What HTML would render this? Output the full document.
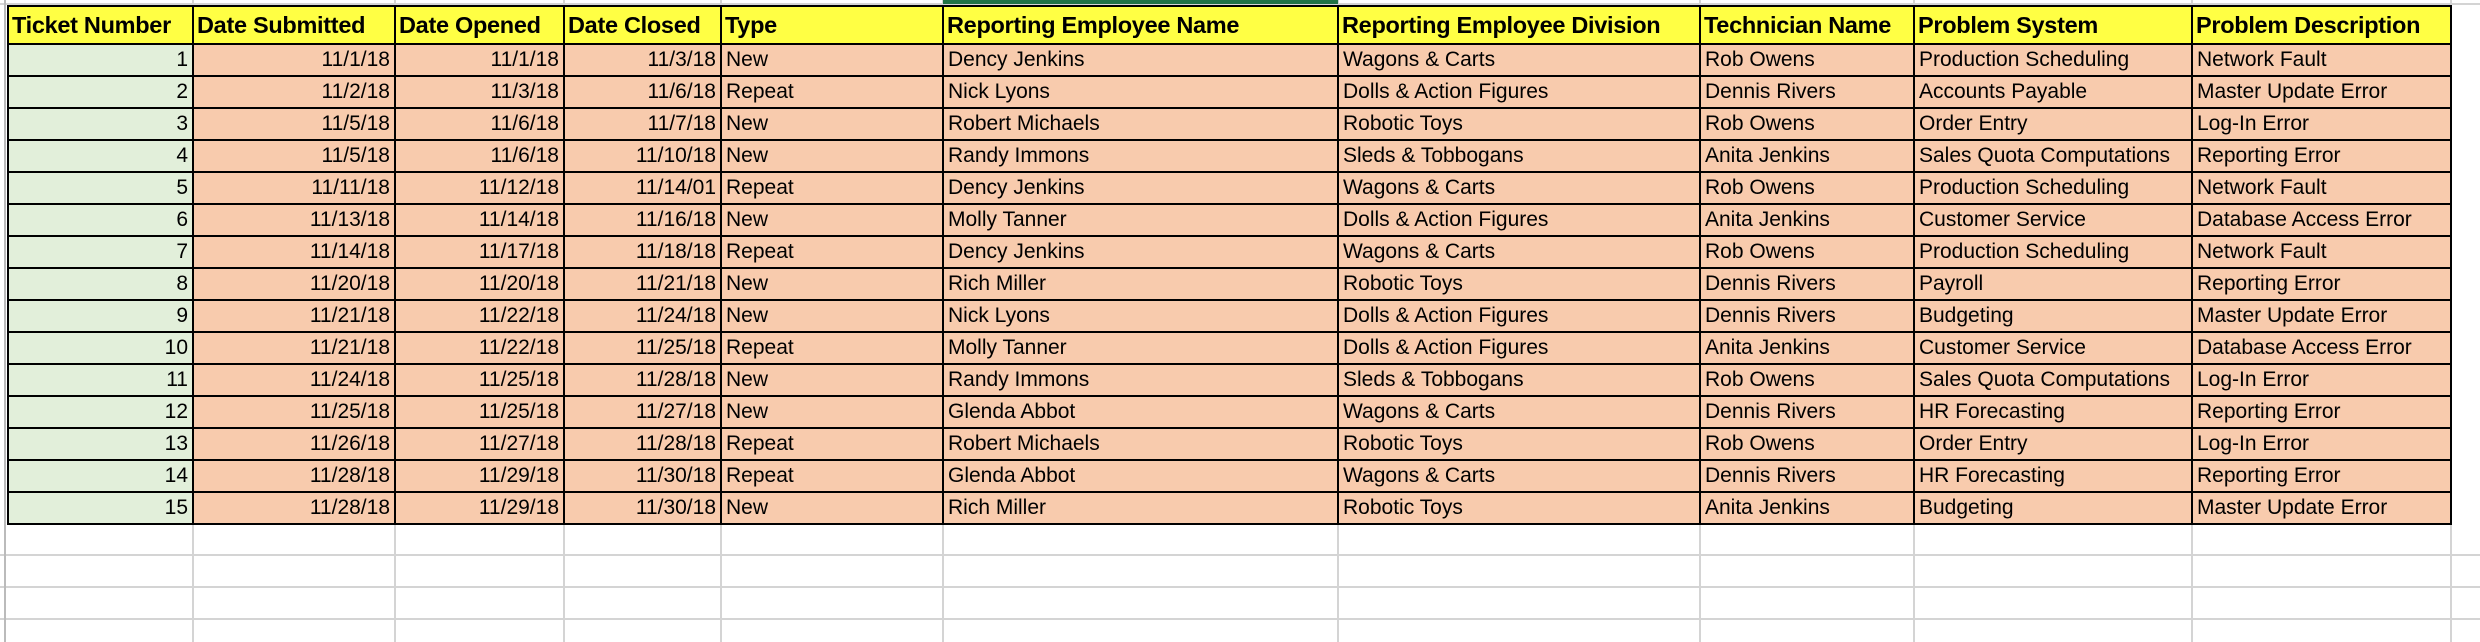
<!DOCTYPE html>
<html><head><meta charset="utf-8"><style>
html,body{margin:0;padding:0;background:#fff;width:2480px;height:642px;overflow:hidden;position:relative;font-family:"Liberation Sans",sans-serif;}
.gv{position:absolute;top:0;width:2px;height:642px;background:#d4d4d4;}
.gh{position:absolute;left:0;height:2px;width:2480px;background:#d4d4d4;}
table{position:absolute;left:7px;top:5px;border-collapse:collapse;table-layout:fixed;background:#fff;}
td{border:2px solid #000;height:30px;padding:0 4px;font-size:21px;white-space:nowrap;overflow:hidden;background:#f8cbad;color:#000;line-height:30px;}
tr.h td{background:#ffff44;font-weight:bold;height:36px;line-height:36px;font-size:23.5px;letter-spacing:-0.3px;padding:0 3px;}
td.n{background:#e2efda;text-align:right;}
td.r{text-align:right;}
</style></head><body>
<div class="gh" style="top:3px"></div>
<div class="gh" style="top:554px"></div>
<div class="gh" style="top:586px"></div>
<div class="gh" style="top:618px"></div>
<div class="gv" style="left:4px;background:#bbb"></div>
<div class="gv" style="left:192px"></div><div class="gv" style="left:394px"></div><div class="gv" style="left:563px"></div><div class="gv" style="left:720px"></div><div class="gv" style="left:942px"></div><div class="gv" style="left:1337px"></div><div class="gv" style="left:1699px"></div><div class="gv" style="left:1913px"></div><div class="gv" style="left:2191px"></div><div class="gv" style="left:2450px"></div>
<div style="position:absolute;left:943px;top:0;width:395px;height:4px;background:#217346"></div>
<table>
<colgroup><col style="width:185px"><col style="width:202px"><col style="width:169px"><col style="width:157px"><col style="width:222px"><col style="width:395px"><col style="width:362px"><col style="width:214px"><col style="width:278px"><col style="width:259px"></colgroup>
<tr class="h"><td>Ticket Number</td><td>Date Submitted</td><td>Date Opened</td><td>Date Closed</td><td>Type</td><td>Reporting Employee Name</td><td>Reporting Employee Division</td><td>Technician Name</td><td>Problem System</td><td>Problem Description</td></tr>
<tr><td class="n">1</td><td class="r">11/1/18</td><td class="r">11/1/18</td><td class="r">11/3/18</td><td>New</td><td>Dency Jenkins</td><td>Wagons &amp; Carts</td><td>Rob Owens</td><td>Production Scheduling</td><td>Network Fault</td></tr>
<tr><td class="n">2</td><td class="r">11/2/18</td><td class="r">11/3/18</td><td class="r">11/6/18</td><td>Repeat</td><td>Nick Lyons</td><td>Dolls &amp; Action Figures</td><td>Dennis Rivers</td><td>Accounts Payable</td><td>Master Update Error</td></tr>
<tr><td class="n">3</td><td class="r">11/5/18</td><td class="r">11/6/18</td><td class="r">11/7/18</td><td>New</td><td>Robert Michaels</td><td>Robotic Toys</td><td>Rob Owens</td><td>Order Entry</td><td>Log-In Error</td></tr>
<tr><td class="n">4</td><td class="r">11/5/18</td><td class="r">11/6/18</td><td class="r">11/10/18</td><td>New</td><td>Randy Immons</td><td>Sleds &amp; Tobbogans</td><td>Anita Jenkins</td><td>Sales Quota Computations</td><td>Reporting Error</td></tr>
<tr><td class="n">5</td><td class="r">11/11/18</td><td class="r">11/12/18</td><td class="r">11/14/01</td><td>Repeat</td><td>Dency Jenkins</td><td>Wagons &amp; Carts</td><td>Rob Owens</td><td>Production Scheduling</td><td>Network Fault</td></tr>
<tr><td class="n">6</td><td class="r">11/13/18</td><td class="r">11/14/18</td><td class="r">11/16/18</td><td>New</td><td>Molly Tanner</td><td>Dolls &amp; Action Figures</td><td>Anita Jenkins</td><td>Customer Service</td><td>Database Access Error</td></tr>
<tr><td class="n">7</td><td class="r">11/14/18</td><td class="r">11/17/18</td><td class="r">11/18/18</td><td>Repeat</td><td>Dency Jenkins</td><td>Wagons &amp; Carts</td><td>Rob Owens</td><td>Production Scheduling</td><td>Network Fault</td></tr>
<tr><td class="n">8</td><td class="r">11/20/18</td><td class="r">11/20/18</td><td class="r">11/21/18</td><td>New</td><td>Rich Miller</td><td>Robotic Toys</td><td>Dennis Rivers</td><td>Payroll</td><td>Reporting Error</td></tr>
<tr><td class="n">9</td><td class="r">11/21/18</td><td class="r">11/22/18</td><td class="r">11/24/18</td><td>New</td><td>Nick Lyons</td><td>Dolls &amp; Action Figures</td><td>Dennis Rivers</td><td>Budgeting</td><td>Master Update Error</td></tr>
<tr><td class="n">10</td><td class="r">11/21/18</td><td class="r">11/22/18</td><td class="r">11/25/18</td><td>Repeat</td><td>Molly Tanner</td><td>Dolls &amp; Action Figures</td><td>Anita Jenkins</td><td>Customer Service</td><td>Database Access Error</td></tr>
<tr><td class="n">11</td><td class="r">11/24/18</td><td class="r">11/25/18</td><td class="r">11/28/18</td><td>New</td><td>Randy Immons</td><td>Sleds &amp; Tobbogans</td><td>Rob Owens</td><td>Sales Quota Computations</td><td>Log-In Error</td></tr>
<tr><td class="n">12</td><td class="r">11/25/18</td><td class="r">11/25/18</td><td class="r">11/27/18</td><td>New</td><td>Glenda Abbot</td><td>Wagons &amp; Carts</td><td>Dennis Rivers</td><td>HR Forecasting</td><td>Reporting Error</td></tr>
<tr><td class="n">13</td><td class="r">11/26/18</td><td class="r">11/27/18</td><td class="r">11/28/18</td><td>Repeat</td><td>Robert Michaels</td><td>Robotic Toys</td><td>Rob Owens</td><td>Order Entry</td><td>Log-In Error</td></tr>
<tr><td class="n">14</td><td class="r">11/28/18</td><td class="r">11/29/18</td><td class="r">11/30/18</td><td>Repeat</td><td>Glenda Abbot</td><td>Wagons &amp; Carts</td><td>Dennis Rivers</td><td>HR Forecasting</td><td>Reporting Error</td></tr>
<tr><td class="n">15</td><td class="r">11/28/18</td><td class="r">11/29/18</td><td class="r">11/30/18</td><td>New</td><td>Rich Miller</td><td>Robotic Toys</td><td>Anita Jenkins</td><td>Budgeting</td><td>Master Update Error</td></tr>
</table>
</body></html>
